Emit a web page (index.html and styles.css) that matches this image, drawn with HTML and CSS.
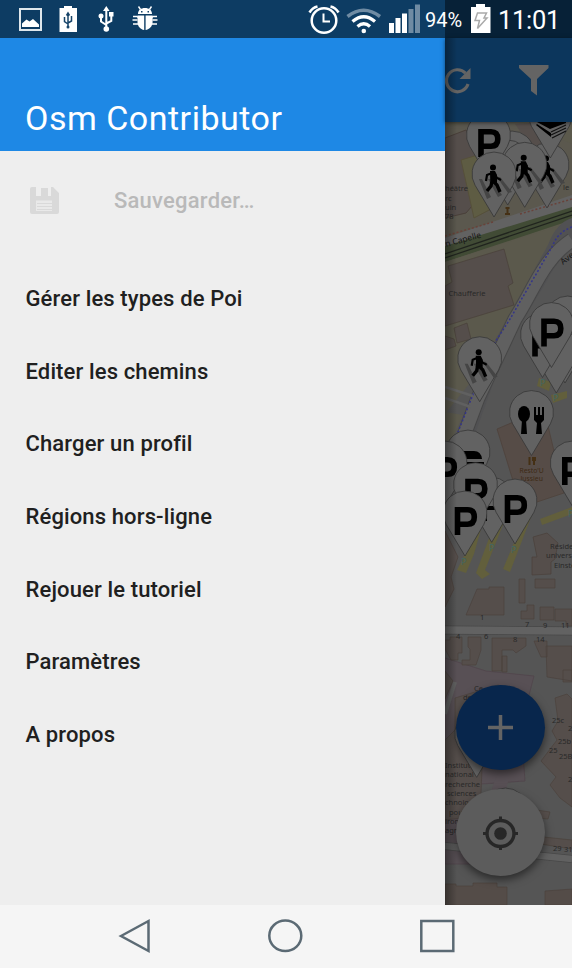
FILE: index.html
```html
<!DOCTYPE html>
<html lang="fr">
<head>
<meta charset="utf-8">
<title>Osm Contributor</title>
<link rel="stylesheet" href="styles.css">
</head>
<body>
<div class="screen">
  <header class="status">
    <div class="notifications">
      <svg width="150" height="38" viewBox="15 0 150 38">
        <rect x="20" y="9" width="21" height="21" fill="none" stroke="#dfe7ec" stroke-width="2"/>
        <path d="M22 27v-3.500l4.500-4 3 2 3.500-2.500 6 5.500V27z" fill="#fff"/>
        <path d="M64 6h8v2h5v24H59.500V8H64z" fill="#fff"/>
        <g fill="none" stroke="#174469" stroke-width="1.500"><path d="M68 27V14M68 24l-3.500-2.500V17M68 23l3.500-2v-5M66.500 15.500L68 13l1.500 2.500"/></g><circle cx="68" cy="27" r="1.500" fill="#174469"/>
        <g fill="none" stroke="#fff" stroke-width="2"><path d="M106.300 29V10M106.300 25l-5.300-3.500V16M106.300 23.500l5-2.500v-6"/></g>
        <path d="M103 11l3.300-5 3.300 5zM109 12h4.500v4.500H109z" fill="#fff"/><circle cx="101" cy="16" r="2.500" fill="#fff"/><circle cx="106.300" cy="29" r="2.800" fill="#fff"/>
        <path d="M138 14c0-4 3-6 7-6s7 2 7 6zM137.500 15.500h6.700V30c-4-.6-6.700-4-6.700-8zM145.600 15.500h7V22c0 4-3 7.400-7 8z" fill="#fff"/>
        <path d="M138.500 6.500l2 3M151.500 6.500l-2 3M133 16.500h4l1 1M132.500 20h5M133 24h5M157 16.500h-4l-1 1M157.500 20h-5M157 24h-5" fill="none" stroke="#fff" stroke-width="1.400"/>
        <path d="M141 11h1.500v1.500H141zM147.500 11h1.500v1.500h-1.500z" fill="#174469"/>
      </svg>
    </div>
    <div class="system">
      <svg width="115" height="38" viewBox="306 0 115 38">
        <g fill="none" stroke="#fff">
          <circle cx="324" cy="20.500" r="12.300" stroke-width="2.500"/><path d="M323.500 13.500v8h6.500" stroke-width="2"/><path d="M309.500 12.500q3-5 8-6M330.500 6.500q5 1 8 6" stroke-width="2.600"/>
          <path d="M347.500 16.500q16-12.500 32.500 0" stroke="#6f8ba3" stroke-width="3.500"/><path d="M352.500 21.500q11.300-9.500 22.500 0M357.500 26.500q6.300-5.500 12.500 0" stroke-width="3.300"/>
        </g>
        <circle cx="363.800" cy="31" r="2.300" fill="#fff"/>
        <path d="M389 23h5v10h-5zM395.500 18h5v15h-5zM402 13.500h5V33h-5z" fill="#fff"/><path d="M408.500 9h5v24h-5zM415 4.500h5V33h-5z" fill="#6f8ba3"/>
      </svg>
      <span class="percent">94%</span>
      <svg class="battery" width="20" height="38" viewBox="471 0 20 38"><path d="M476 4h9v3h5.500v26H471V7h5z" fill="#fff"/><path d="M477.500 13h9l-2.500 5h3l-9.500 10.500 2-8H475z" fill="none" stroke="#aaa" stroke-width="1.500"/></svg>
      <time class="clock">11:01</time>
    </div>
  </header>

  <main class="app">
    <aside class="drawer">
      <div class="drawer-head"><h1>Osm Contributor</h1></div>
      <div class="save">
        <svg width="30" height="28" viewBox="0 0 30 28"><path d="M2 0h4v9h15V0h2l6 6v19q0 2-2 2H2q-2 0-2-2V2q0-2 2-2z" fill="#d9d9d9"/><path d="M11 1h7v8h-7z" fill="#d9d9d9"/><path d="M6 13.500h16V24H6z" fill="#e9e9e9"/><path d="M7 16.500h15M7 19.500h15M7 22.500h15" stroke="#d9d9d9"/></svg>
        <span>Sauvegarder…</span>
      </div>
      <nav class="menu">
        <a>Gérer les types de Poi</a>
        <a>Editer les chemins</a>
        <a>Charger un profil</a>
        <a>Régions hors-ligne</a>
        <a>Rejouer le tutoriel</a>
        <a>Paramètres</a>
        <a>A propos</a>
      </nav>
    </aside>

    <section class="content">
      <div class="toolbar">
        <svg width="127" height="84" viewBox="445 38 127 84">
          <path d="M465.500 73.200A11 11 0 1 0 468 84" fill="none" stroke="#646464" stroke-width="3.200"/><path d="M470.500 68v11H459.500z" fill="#646464"/>
          <path d="M519 65h29.500v3L537 79v16.500L531 91V79L519 68z" fill="#646464"/>
        </svg>
      </div>
      <div class="map">
        <svg width="127" height="783" viewBox="445 122 127 783">
          <defs>
            <path id="pin" d="M0 43L-18.900 11.300A22 22 0 1 1 18.900 11.300Z" fill="#626262" stroke="#363636" stroke-width=".8"/>
            <g id="parking"><use href="#pin"/><path d="M-7.500 22V-3.200H2.500Q9.300-3.200 9.300 4T2.500 11.200H-7.500" fill="none" stroke="#000" stroke-width="5.600"/></g>
            <g id="crossing"><use href="#pin"/><path d="M-15 5h3l9 18-4 2zM-6 5h3l11 16-4 2zM3 3h3l12 15-4 1z" fill="#454545"/><circle cx="-1" cy="-6.500" r="3" fill="#000"/><path d="M-2-1v9M-2 7l-1 5-4 5M-1 7l4 4 3 7" fill="none" stroke="#000" stroke-width="3.400"/><path d="M-2-1l-5 2-1 6M0-1l3 5 4 2" fill="none" stroke="#000" stroke-width="2.200"/><path d="M-4-3h5l2 4v8h-6z" fill="#000"/></g>
          </defs>
          <rect x="445" y="122" width="127" height="783" fill="#555"/>
          <path d="M445 122h127v106L507 262 445 330z" fill="#5b594c"/>
          <path d="M445 238l127-40v19l-127 44z" fill="#414b35"/>
          <path d="M445 128l24-6h52l51 22v54l-127 42z" fill="#5b584e"/>
          <path d="M445 138l21-8 24 55-24 28-21 5z" fill="#554e4b" stroke="#4a403a"/>
          <path d="M461 160l20-6 10 55-17 9z" fill="#5e5c43" stroke="#56503a"/>
          <path d="M515 124l34-2 11 23-26 7z" fill="#554e4b"/>
          <path d="M445 246l127-39v-12l-127 43z" fill="#626262"/>
          <path d="M572 199v12l-127 46v5l127-42z" fill="#414b35"/>
          <path d="M445 236l48-14M520 214l52-15" fill="none" stroke="#69423a" stroke-width="1.500" stroke-dasharray="2 2"/>
          <path d="M445 254l127-43M445 258l127-43" fill="none" stroke="#20241e" stroke-width="1.200"/>
          <path d="M445 262l117-37-7 25-57 98-53 66z" fill="#5b594c"/>
          <path d="M448 266l56-17 9 34-5 3 6 19-69 21v-40l7-4z" fill="#554e4b" stroke="#494039" stroke-width=".7"/>
          <path d="M454 328l13-5 4 16-14 4zM445 336l9 3 2 7-11 4z" fill="#554e4b" stroke="#494039" stroke-width=".7"/>
          <path d="M572 218q-16 5-24 27l-55 99-36 90h18l31-86 39-64q14-27 27-34z" fill="#515153"/>
          <path d="M572 240c-30 20-38 50-57 79l-37 79-18 48" fill="none" stroke="#474747" stroke-width="15"/>
          <path d="M572 240c-30 20-38 50-57 79l-37 79-18 48" fill="none" stroke="#606060" stroke-width="13"/>
          <path d="M572 227q-14 5-19 18l-43 74-18 28-34 85" fill="none" stroke="#343588" stroke-width="1.500" stroke-dasharray="2 2"/>
          <path d="M445 387l28 9M445 398l26 9" stroke="#606060" stroke-width="2.500"/>
          <path d="M445 412l18 3-12 27h-6z" fill="#5b594c"/>
          <path d="M497 429l47-20 20 84-36 12-9-5z" fill="#564c47" stroke="#4d4039" stroke-width=".7"/>
          <path d="M540 519l32-12v7l-30 11zM539 378l12 4-2 9-12-5zM551 395l16-4v7l-14 5zM465 554l10-28 6 3-7 25-8 19-9-3zM476 573l24-64 8 3-23 58 5 4-8 5zM503 569l25-60 5 3-23 60z" fill="#625f3c"/>
          <path d="M445 531l13 26-7 20 3 12-9 18z" fill="#554e4b" stroke="#4a403b" stroke-width=".7"/>
          <path d="M533 537l14-4 11 10-3 16-4 3v12l-19 1v-18h5z" fill="#554e4b" stroke="#4a403b" stroke-width=".7"/>
          <path d="M477 589h12v-2h15v28h-38zM519 579h6v24h-6zM535 579h20v9h-20zM521 611h6v-6h7v14h-13zM540 607h14v13h-14zM555 609h17v17h-6v-5h-11z" fill="#554e4b" stroke="#493f3a" stroke-width=".6"/>
          <path d="M445 630l127 1" stroke="#484848" stroke-width="9"/><path d="M445 630l127 1" stroke="#626262" stroke-width="7.500"/>
          <path d="M445 658l41 13 48 5-13 50 4 55-44 3-5 80h-31z" fill="#585055" stroke="#50444a" stroke-width=".7"/>
          <path d="M450 637h12v16h-4v7h-7l-6-11v-9h5zM468 637h13v13l-5 15h-14v-5h8v-11l-2-2zM492 638h34v8l-10 7-3-3h-11v21h-10zM502 656h5v16h-5zM534 641h13v16h-6l-5-11zM546 646h26v35l-25-4zM563 670h9v12h-9z" fill="#554e4b" stroke="#493f3a" stroke-width=".6"/>
          <path d="M445 671l8 10-8 18zM455 698l43-13 20 9v25l-35 27-3 70-35 4v-80l10-10z" fill="#554e4b" stroke="#4a403b" stroke-width=".6"/>
          <path d="M455 682l-10 32" stroke="#606060" stroke-width="4"/>
          <path d="M500 766h12l-7 28h-15z" fill="#585055"/>
          <path d="M555 698l12-4 5 5v108l-12-9-10-13 6-8-15-16 16-21-5-9 6-10zM530 809l20 3-2 7-14-1v18l38 4v9l-44-7z" fill="#554e4b" stroke="#494039" stroke-width=".6"/>
          <path d="M445 846l127 13" stroke="#484848" stroke-width="8"/><path d="M445 846l127 13" stroke="#616161" stroke-width="6.500"/>
          <path d="M445 884h11v2h17v-3h24v4h10v18h-62zM545 891l27-2v16h-27z" fill="#544c48" stroke="#493f3a" stroke-width=".6"/>

          <g class="map-label">
            <text x="445" y="191">héâtre</text><text x="445" y="201">rc</text><text x="445" y="210">uin</text><text x="445" y="219">78</text><text x="563" y="190">le</text>
            <text class="street" x="446" y="247" transform="rotate(-15 446 247)">n Capelle</text>
            <text class="chaufferie" x="448.500" y="295.500">Chaufferie</text>
            <text class="street" x="563" y="265" transform="rotate(-38 563 265)">Ave</text>
            <text x="550" y="549">Réside</text><text x="546" y="558">universi</text><text x="554" y="568">Einste</text>
            <text x="480" y="620">1</text><text x="525" y="627">7</text><text x="543" y="628">9</text><text x="561" y="628">11</text>
            <text x="456" y="639">4</text><text x="484" y="639">6</text><text x="513" y="642">8</text><text x="536" y="642">14</text>
            <text x="474" y="691">Ce</text><text x="463" y="700">de</text><text x="552" y="723">25c</text><text x="568" y="731">2</text><text x="558" y="744">25b</text><text x="549" y="753">25</text><text x="559" y="759">25B</text><text x="568" y="782">2</text>
            <text x="445" y="768">Institut</text><text x="445" y="777">national</text><text x="445" y="787">recherche</text><text x="447" y="796">sciences</text><text x="445" y="805">chnolo</text><text x="449" y="815">pou</text><text x="445" y="824">iron</text><text x="445" y="833">agn</text><text x="553" y="851">29</text><text x="564" y="852">31</text>
          </g>
          <g class="resto-label"><text x="519.500" y="473">Resto'U</text><text x="520.500" y="481">Jussieu</text></g>
          <path d="M529.500 457v8M534 457v8M533 457v3h2v-3M505.500 208h4M507.500 208v6M505 214h5" stroke="#453015" stroke-width="2" fill="none"/>
          <g class="parking-label"><text x="540" y="386">P</text><text x="553" y="401">P</text><text x="461" y="565">P</text><text x="489" y="551">P</text><text x="511" y="553">P</text><text x="568" y="517">P</text></g>

          <use href="#pin" x="512" y="153"/><use href="#pin" x="507.700" y="162"/>
          <use href="#parking" x="488.500" y="135"/>
          <use href="#crossing" x="547" y="165"/>
          <use href="#pin" x="550.300" y="115"/>
          <path d="M537 122h29v1l-16 6zM537 124l14 9v4l-15-12z" fill="#000"/><path d="M551 132l15-7M551 135l15-7M552 138l14-7" stroke="#111" stroke-width="1.300"/>
          <use href="#crossing" x="524.700" y="164.300"/><use href="#crossing" x="494" y="174"/>
          <use href="#crossing" x="479.700" y="358.700"/>
          <use href="#pin" x="567.700" y="318"/><use href="#pin" x="565" y="340"/><use href="#pin" x="556.300" y="350"/><use href="#parking" x="542.500" y="334.500"/><use href="#parking" x="551.500" y="324.500"/>
          <use href="#pin" x="531.500" y="412.500"/>
          <ellipse cx="524" cy="414" rx="6" ry="8" fill="#000"/><path d="M522 420h4l1 14h-6zM534 407h2v8h2v-8h2v8h2v-8h2v13l-3 3 1 11h-6l1-11-3-3z" fill="#000"/>
          <use href="#parking" x="572.300" y="463"/>
          <use href="#pin" x="468" y="452"/><path d="M464 451h10q7 0 8 8h-18zM466 462h18v2h-18z" fill="#000"/>
          <use href="#parking" x="445" y="463"/><use href="#pin" x="491.700" y="499.300"/><path d="M487 506h8v4h-8zM482 513h5v8h-5z" fill="#000"/>
          <use href="#parking" x="475.500" y="484.700"/><use href="#parking" x="465" y="513"/><use href="#parking" x="515" y="501"/>
          <use href="#pin" x="476.700" y="734.300"/><use href="#pin" x="505.500" y="810"/>
        </svg>
        <div class="fab fab-add"><svg width="26" height="26" viewBox="0 0 26 26"><path d="M12.500 0v25M0 12.500h25" stroke="#646464" stroke-width="3.500"/></svg></div>
        <div class="fab fab-locate"><svg width="36" height="34" viewBox="-17.500 -17.500 36 34"><ellipse rx="13.500" ry="13" fill="none" stroke="#272727" stroke-width="3.400"/><circle r="6.300" fill="#272727"/><path d="M0-17v5M0 12v5M-17.500 0h5M12.500 0h5" stroke="#272727" stroke-width="3"/></svg></div>
      </div>
    </section>
  </main>

  <footer class="navbar">
    <svg width="34" height="36" viewBox="0 0 34 36"><path d="M3 18L30.500 3v30z"/></svg>
    <svg width="36" height="36" viewBox="0 0 36 36"><ellipse cx="17.300" cy="17.800" rx="16" ry="15.300"/></svg>
    <svg width="36" height="36" viewBox="0 0 36 36"><path d="M1.300 3h32v30h-32z"/></svg>
  </footer>
</div>
</body>
</html>
```
FILE: styles.css
```css
body { margin: 0; font-family: Roboto, "Liberation Sans", sans-serif; }
svg { display: block; flex: none; }
.screen { width: 572px; height: 968px; display: grid; grid-template-rows: 38px 867px 63px; overflow: hidden; }
.status { display: flex; justify-content: space-between; background: linear-gradient(90deg, #0d3c63 445px, #072137 445px); color: #fff; }
.notifications { padding-left: 15px; }
.system { display: flex; align-items: center; padding-right: 12px; }
.percent { width: 46px; padding-left: 4px; font-size: 20px; box-sizing: border-box; margin-right: 4px; padding-top: 1px; }
.clock { width: 62px; margin-left: 7px; font-size: 25.500px; line-height: 38px; letter-spacing: -.3px; padding-top: 1px; white-space: nowrap; }
.app { display: grid; grid-template-columns: 445px 127px; }
.drawer { background: #eee; }
.drawer-head { box-sizing: border-box; height: 113px; padding: 58px 26px 0; background: #1e88e5; }
h1 { margin: 0 0 0 -1px; color: #fff; font-size: 34px; font-weight: 400; line-height: 44px; letter-spacing: .5px; white-space: nowrap; }
.save { display: flex; align-items: center; gap: 54px; height: 99px; padding-left: 30px; color: #b9b9b9; font-size: 22px; font-weight: 500; letter-spacing: .22px; }
.menu { display: flex; flex-direction: column; padding: 13px 26px 0 25.500px; color: #202020; font-size: 22px; font-weight: 500; letter-spacing: .13px; }
.menu a { height: 72.650px; line-height: 72.650px; }
.content { display: flex; flex-direction: column; position: relative; }
.content::after { content: ""; position: absolute; z-index: 2; inset: 0 auto 0 0; width: 12px; background: linear-gradient(90deg, rgba(0,0,0,.35), transparent); }
.toolbar { height: 84px; background: #0c365c; box-shadow: 0 1px 4px rgba(0,0,0,.5); z-index: 1; }
.map { position: relative; height: 783px; }
.map-label { font: 7.500px "Noto Sans", sans-serif; fill: #292929; }
.map-label .street { font-size: 8.500px; fill: #161616; }
.map-label .chaufferie { font-size: 7.500px; }
.resto-label { font: 6.800px "Noto Sans", sans-serif; fill: #3d2a15; }
.parking-label { font: 9px "Noto Sans", sans-serif; fill: #416565; }
.fab { position: absolute; left: 11px; width: 89px; display: flex; align-items: center; justify-content: center; border-radius: 50%; box-shadow: 0 4px 8px rgba(0,0,0,.5); }
.fab-add { top: 563px; height: 85px; background: #08264c; }
.fab-locate { top: 667px; height: 87px; background: #5c5c5c; }
.navbar { display: flex; align-items: center; gap: 116px; padding: 0 0 2px 118px; box-sizing: border-box; height: 63px; background: #f5f5f5; }
.navbar svg { fill: none; stroke: #5b6a74; stroke-width: 2.500; }
```
